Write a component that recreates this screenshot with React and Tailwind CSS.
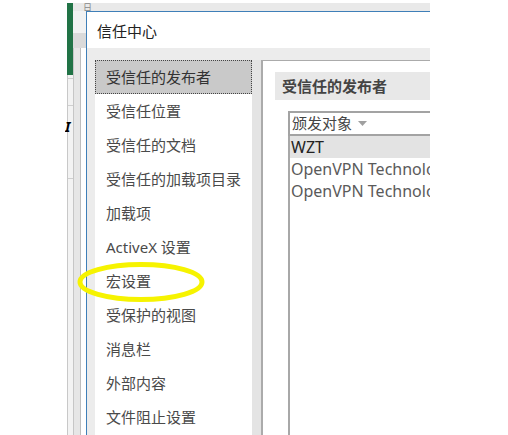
export default function App() {
  const nav = [
    "受信任的发布者",
    "受信任位置",
    "受信任的文档",
    "受信任的加载项目录",
    "加载项",
    "ActiveX 设置",
    "宏设置",
    "受保护的视图",
    "消息栏",
    "外部内容",
    "文件阻止设置",
  ];
  return (
    <div className="w-[508px] h-[435px] bg-white flex overflow-hidden relative font-['Noto_Sans','Noto_Sans_CJK_SC',sans-serif]">
      <div className="w-[65px] shrink-0" />
      <div className="relative w-[365px] h-full overflow-hidden flex flex-col shrink-0">
        {/* Excel window behind */}
        <div className="h-[3px] shrink-0" />
        <div className="flex flex-1">
          <div className="w-[2px] shrink-0 bg-white" />
          <div className="w-[6px] shrink-0 flex flex-col">
            <div className="h-[72px] bg-[#217346]" />
            <div className="flex-1 bg-[#f3f3f3] border-l border-[#c8c8c8] flex flex-col">
              <div className="h-[3px]" />
              <div className="h-px bg-[#cfcfcf]" />
              <div className="h-[26px]" />
              <div className="h-px bg-[#cfcfcf]" />
              <div className="h-[72px]" />
              <div className="h-px bg-[#cfcfcf]" />
            </div>
          </div>
          <div className="flex-1 flex flex-col">
            <div className="h-[8px] bg-[#e9e9e9] flex items-center pl-[10px]">
              <span className="text-[9px] leading-none text-[#888]">日</span>
            </div>
            <div className="h-[22px] bg-[#f2f2f2]" />
            <div className="h-[15px] bg-[#dadada]" />
            <div className="flex-1 flex">
              <div className="w-[7px] bg-[#e6e6e6] border-l border-[#c6c6c6]" />
              <div className="w-[5px] bg-white border-l border-[#bdbdbd]" />
            </div>
          </div>
        </div>
        <div className="absolute left-0 top-[120px] text-[14px] font-bold italic leading-none text-black">I</div>

        {/* Trust Center dialog window */}
        <div className="absolute left-[21px] top-[11px] w-[400px] bottom-0 bg-white border-l border-t border-[#3f7fb8] flex flex-col">
          <div className="h-[36px] shrink-0 flex items-center pl-[10px] pt-[3px] text-[15px] leading-none text-[#222]">
            信任中心
          </div>
          <div className="flex-1 bg-[#ececec] flex pt-[12px] pl-[8px] min-h-0">
            <div className="w-[157px] shrink-0 bg-white flex flex-col">
              {nav.map((t, i) => (
                <div
                  key={t}
                  className={
                    i === 0
                      ? "h-[34px] shrink-0 flex items-center pl-[10px] text-[15px] leading-none text-[#333] bg-[#c9c9c9] border border-dotted border-[#444]"
                      : "h-[34px] shrink-0 flex items-center pl-[11px] text-[15px] leading-none text-[#4a4a4a]"
                  }
                >
                  {t}
                </div>
              ))}
            </div>
            <div className="w-[9px] shrink-0 bg-[#e4e4e4]" />
            <div className="flex-1 bg-white border-l-2 border-t border-[#ababab] pl-[12px] pt-[11px] flex flex-col">
              <div className="h-[28px] shrink-0 bg-[#e8e8e8] flex items-center pl-[7px] text-[15px] leading-none font-bold text-[#444]">
                受信任的发布者
              </div>
              <div className="ml-[13px] mt-[11px] flex-1 flex flex-col">
                <div className="h-[25px] shrink-0 border-2 border-r-0 border-[#a3a3a3] flex items-center pl-[2px] gap-[6px] text-[15px] leading-none text-[#444]">
                  <span>颁发对象</span>
                  <svg width="9" height="6" viewBox="0 0 9 6">
                    <path d="M0 0 L9 0 L4.5 5 Z" fill="#a0a0a0" />
                  </svg>
                </div>
                <div className="flex-1 border-l-2 border-[#a8a8a8] flex flex-col">
                  <div className="h-[22px] shrink-0 bg-[#e3e3e3] flex items-center pl-[1px] text-[16px] leading-none text-[#222]">
                    WZT
                  </div>
                  <div className="h-[22px] shrink-0 flex items-center pl-[1px] text-[16px] leading-none text-[#5a5a5a] whitespace-nowrap">
                    OpenVPN Technologies, Inc.
                  </div>
                  <div className="h-[22px] shrink-0 flex items-center pl-[1px] text-[16px] leading-none text-[#5a5a5a] whitespace-nowrap">
                    OpenVPN Technologies, Inc.
                  </div>
                </div>
              </div>
            </div>
          </div>
        </div>
      </div>

      {/* Yellow highlight ellipse drawn over the screenshot */}
      <svg className="absolute left-[76px] top-[261px]" width="132" height="44" viewBox="0 0 132 44">
        <ellipse cx="65" cy="21" rx="61" ry="17.5" fill="none" stroke="#f6f300" strokeWidth="5" />
      </svg>
    </div>
  );
}
